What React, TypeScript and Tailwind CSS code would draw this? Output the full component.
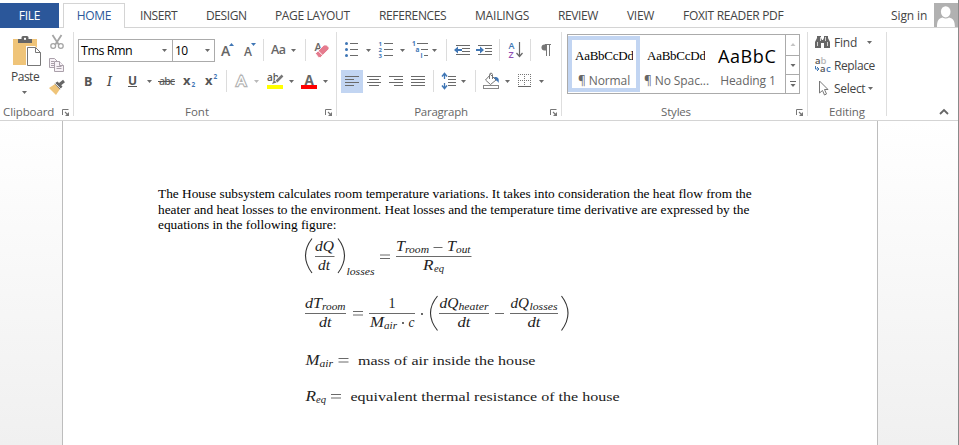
import React from "react";

const GREY = "#6a6a6a";
const BLUE = "#3f76b5";

type KidProps = { children?: React.ReactNode };

/* A strip of a toolbar row; coordinates inside are those of the window. */
function Cell({ x, w, y, h = 26, children }: KidProps & { x: number; w: number; y: number; h?: number }) {
  return (
    <svg width={w} height={h} viewBox={`${x} ${y} ${w} ${h}`} className="block shrink-0" fontFamily="'Open Sans', sans-serif">
      {children}
    </svg>
  );
}

function Arrow({ x, y, c = GREY }: { x: number; y: number; c?: string }) {
  return <path d={`M${x} ${y}h5l-2.5 3z`} fill={c} />;
}

function VSep({ x, y }: { x: number; y: number }) {
  return <rect x={x} y={y} width="1" height="22" fill="#dcdcdc" />;
}

function Lines({ rows, c = GREY }: { rows: number[][]; c?: string }) {
  return (
    <>
      {rows.map(([x, y, w], i) => (
        <rect key={i} x={x} y={y} width={w} height="1" fill={c} />
      ))}
    </>
  );
}

function Launcher() {
  return (
    <svg width="8" height="8" viewBox="0 0 8 8" className="block shrink-0">
      <path d="M.5 6V.5H6.5" fill="none" stroke="#777" />
      <path d="M3 3l3 3" stroke="#777" strokeWidth="1.1" />
      <path d="M7 3v4H3z" fill="#777" />
    </svg>
  );
}

function Divider() {
  return <div className="mt-1 h-[84px] w-px shrink-0 bg-[#dedede]" />;
}

function Tab({ label, className }: { label: string; className: string }) {
  return <div className={`h-[27px] shrink-0 pt-[7px] text-[12px] leading-[17px] text-[#444] ${className}`}>{label}</div>;
}

function TabBar() {
  return (
    <div className="flex h-7 shrink-0 border-b border-[#d4d4d4]">
      <div className="mt-[3px] h-[25px] w-[59px] shrink-0 bg-[#2b579a] pt-1 text-center text-[12px] leading-[17px] tracking-[-0.3px] text-white">FILE</div>
      <div className="mt-[3px] ml-1 h-[25px] w-[62px] shrink-0 border border-b-0 border-[#d4d4d4] bg-white pt-[3px] text-center text-[12px] leading-[17px] tracking-[-0.3px] text-[#2b579a]">HOME</div>
      <Tab label="INSERT" className="ml-[15px] w-[66px] tracking-[-0.4px]" />
      <Tab label="DESIGN" className="w-[69px] tracking-[-0.4px]" />
      <Tab label="PAGE LAYOUT" className="w-[104px] tracking-[-0.35px]" />
      <Tab label="REFERENCES" className="w-[96px] tracking-[-0.35px]" />
      <Tab label="MAILINGS" className="w-[83px] tracking-[-0.2px]" />
      <Tab label="REVIEW" className="w-[69px] tracking-[-0.4px]" />
      <Tab label="VIEW" className="w-[56px] tracking-[-0.3px]" />
      <Tab label="FOXIT READER PDF" className="w-[208px] tracking-[-0.3px]" />
      <Tab label="Sign in" className="w-[43px] tracking-[-0.1px]" />
      <svg width="24" height="24" viewBox="0 0 24 24" className="mt-[3px] block shrink-0 bg-[#b1b1b1]">
        <ellipse cx="11.7" cy="8.8" rx="4.8" ry="5.6" fill="#fff" />
        <path d="M3 24c0-6 1.5-8.5 5.5-9.4 2 1.3 4.6 1.3 6.6 0 4 .9 5.8 3.4 5.8 9.4z" fill="#fff" />
      </svg>
    </div>
  );
}

function GroupName({ children, className }: KidProps & { className: string }) {
  return <div className={`shrink-0 text-center text-[11.5px] leading-[16px] text-[#666] ${className}`}>{children}</div>;
}

function Clipboard() {
  return (
    <div className="flex w-[73px] shrink-0 flex-col">
      <div className="flex h-[76px]">
        <div className="flex w-[46px] flex-col">
          <Cell x={0} w={46} y={28} h={41}>
            <rect x="13" y="39" width="24" height="26" fill="#efc479" />
            <path d="M18 43v-4h3.5v-1.500a1.500 1.500 0 011.500-1.500h4a1.500 1.500 0 011.500 1.500v1.500H32v4z" fill="#666" />
            <rect x="24" y="37.800" width="2" height="2" fill="#fff" />
            <path d="M26 46h9l6.500 6.500V67H26z" fill="#fff" />
            <path d="M27.500 47.500h8l5 5V65.500h-13zM35.500 47.500v5h5" fill="none" stroke="#777" />
          </Cell>
          <div className="pl-[11px] text-[12px] leading-[16px] tracking-[-0.5px] text-[#444]">Paste</div>
          <Cell x={0} w={46} y={85} h={12}><Arrow x={22} y={91} /></Cell>
        </div>
        <Cell x={46} w={27} y={28} h={76}>
          <g fill="none" stroke="#a5a5a5">
            <path d="M52.500 35l6.500 10M61.500 35l-6.500 10" strokeWidth="1.800" />
            <circle cx="53.200" cy="46" r="2.400" strokeWidth="1.300" />
            <circle cx="60.800" cy="46" r="2.400" strokeWidth="1.300" />
          </g>
          <g fill="#f7f2f7" stroke="#aaa0aa">
            <path d="M49.500 58.500h5l3 3v6h-8z" />
            <path d="M51 61.500h3M51 63.500h3M51 65.500h3" />
            <path d="M54.500 61.500h5l4 4v6h-9z" />
            <path d="M59.500 61.500v4h4M56.500 66.500h5M56.500 68.500h5" />
          </g>
          <path d="M49 88l6-4 5 5-4 6z" fill="#efc479" />
          <path d="M54.500 83.500l3-2 5 5-2.500 3z" fill="#666" />
          <path d="M59 85l5-4" stroke="#666" strokeWidth="3" />
          <path d="M55 83l6.500 6.500" stroke="#fff" strokeWidth=".8" />
        </Cell>
      </div>
      <div className="flex">
        <GroupName className="ml-[3px] w-[51px] text-left tracking-[-0.1px]">Clipboard</GroupName>
        <div className="mt-[5px] ml-2"><Launcher /></div>
      </div>
    </div>
  );
}

function FontGroup() {
  return (
    <div className="flex w-[262px] shrink-0 flex-col">
      <div className="mt-[10px] flex h-[27px] pl-1">
        <div className="mt-px flex h-[23px] w-[95px] shrink-0 border border-[#ababab]">
          <div className="w-[83px] pl-[2px] text-[12.500px] leading-[22px] tracking-[-0.5px] text-black">Tms Rmn</div>
          <svg width="5" height="3" viewBox="0 0 5 3" className="mt-[9px]"><path d="M0 0h5L2.500 3z" fill={GREY} /></svg>
        </div>
        <div className="mt-px -ml-px flex h-[23px] w-[43px] shrink-0 border border-[#ababab]">
          <div className="w-[32px] pl-[2px] text-[12px] leading-[22px] tracking-[-0.7px] text-black">10</div>
          <svg width="5" height="3" viewBox="0 0 5 3" className="mt-[9px]"><path d="M0 0h5L2.500 3z" fill={GREY} /></svg>
        </div>
        <Cell x={215} w={24} y={38}>
          <text x="221" y="56" fontSize="14" fontWeight="600" fill="#666">A</text>
          <path d="M229 46l2.500-3 2.500 3z" fill={BLUE} />
        </Cell>
        <Cell x={239} w={28} y={38}>
          <text x="244" y="56" fontSize="12" fontWeight="600" fill="#666">A</text>
          <path d="M251 43h5l-2.500 3z" fill={BLUE} />
          <VSep x={263} y={39} />
        </Cell>
        <Cell x={267} w={40} y={38}>
          <text x="271" y="54" fontSize="12.500" fontWeight="600" fill="#666" textLength="15">Aa</text>
          <Arrow x={291} y={49} />
          <VSep x={305} y={39} />
        </Cell>
        <Cell x={307} w={28} y={38}>
          <text x="314.500" y="51" fontSize="11" fontWeight="600" fill="#666">A</text>
          <path d="M315.500 53.500l8.500-8.500h2.500l2.500 2.500v1.500l-8.500 8.500h-2z" fill="#e57b8e" stroke="#fff" strokeWidth=".8" />
          <path d="M317.800 50.500l5.200 5.200" stroke="#fff" />
        </Cell>
      </div>
      <div className="mt-1 flex h-[35px]">
        <Cell x={74} w={26} y={69}><text x="84" y="85.500" fontSize="12.500" fontWeight="700" fill="#555">B</text></Cell>
        <Cell x={100} w={22} y={69}><text x="107" y="85.500" fontSize="13" fontStyle="italic" fontFamily="'DejaVu Serif', serif" fill="#444">I</text></Cell>
        <Cell x={122} w={34} y={69}>
          <text x="128" y="84.500" fontSize="12" fontWeight="700" fill="#555">U</text>
          <rect x="128" y="86" width="9" height="1" fill="#555" />
          <Arrow x={147} y={80} />
        </Cell>
        <Cell x={156} w={23} y={69}>
          <text x="159" y="85" fontSize="10.500" fontWeight="600" fill="#666" textLength="16">abc</text>
          <rect x="158" y="81" width="17" height="1" fill="#555" />
        </Cell>
        <Cell x={179} w={22} y={69}>
          <text x="183" y="85" fontSize="13" fontWeight="700" fill="#555">x</text>
          <text x="191.500" y="87" fontSize="6.500" fontWeight="700" fill={BLUE}>2</text>
        </Cell>
        <Cell x={201} w={28} y={69}>
          <text x="205" y="85" fontSize="13" fontWeight="700" fill="#555">x</text>
          <text x="213.500" y="79" fontSize="6.500" fontWeight="700" fill={BLUE}>2</text>
          <VSep x={226} y={70} />
        </Cell>
        <Cell x={229} w={34} y={69}>
          <text x="236.500" y="86" fontSize="15" fill="#fff" stroke="#b4b4b4" strokeWidth="2.500" paintOrder="stroke">A</text>
          <Arrow x={254} y={80} c="#b9b9b9" />
        </Cell>
        <Cell x={263} w={35} y={69}>
          <text x="267" y="80.500" fontSize="10" fontWeight="600" fill="#555">ab</text>
          <path d="M282.500 75l-8 8" stroke="#fff" strokeWidth="4" />
          <path d="M282.500 75.500l-6 6" stroke="#777" strokeWidth="2.500" />
          <path d="M272 84l2-4 2.500 2.500z" fill="#777" />
          <rect x="267" y="85" width="16" height="4" fill="#ff0" />
          <Arrow x={289} y={80} />
        </Cell>
        <Cell x={298} w={36} y={69}>
          <text x="304.500" y="84.500" fontSize="13.500" fontWeight="700" fill="#666">A</text>
          <rect x="301" y="85" width="16" height="4" fill="#f00" />
          <Arrow x={323} y={80} />
        </Cell>
      </div>
      <div className="flex">
        <GroupName className="ml-[108px] w-[30px]">Font</GroupName>
        <div className="mt-[5px] ml-[113px]"><Launcher /></div>
      </div>
    </div>
  );
}

function ParagraphGroup() {
  return (
    <div className="flex w-[224px] shrink-0 flex-col">
      <div className="mt-[10px] flex h-[27px]">
        <Cell x={337} w={38} y={38}>
          <g fill={BLUE}><circle cx="346.500" cy="43.500" r="1.500" /><circle cx="346.500" cy="49.500" r="1.500" /><circle cx="346.500" cy="55.500" r="1.500" /></g>
          <Lines rows={[[350, 43, 8], [350, 49, 8], [350, 55, 8]]} />
          <Arrow x={366} y={49} />
        </Cell>
        <Cell x={375} w={34} y={38}>
          <g fontSize="6" fontWeight="700" fill={BLUE}>
            <text x="378.500" y="45.800">1</text><text x="378.500" y="52">2</text><text x="378.500" y="58.200">3</text>
          </g>
          <Lines rows={[[384, 43, 9], [384, 49, 9], [384, 55, 9]]} />
          <Arrow x={400} y={49} />
        </Cell>
        <Cell x={409} w={41} y={38}>
          <g fontSize="6.500" fontWeight="700" fill={BLUE}>
            <text x="412" y="46">1</text><text x="415.500" y="52">a</text><text x="420.500" y="58">i</text>
          </g>
          <Lines rows={[[417, 43, 11], [421, 49, 7], [424, 55, 4]]} />
          <Arrow x={432} y={49} />
          <VSep x={446} y={39} />
        </Cell>
        <Cell x={450} w={23} y={38}>
          <Lines rows={[[456, 45, 14], [462, 48, 8], [462, 51, 8], [456, 54, 14]]} />
          <path d="M454 50l4-3.500v2.500h4v2h-4v2.500z" fill={BLUE} />
        </Cell>
        <Cell x={473} w={29} y={38}>
          <Lines rows={[[478, 45, 14], [485, 48, 7], [485, 51, 7], [478, 54, 14]]} />
          <path d="M484 50l-4-3.500v2.500h-4v2h4v2.500z" fill={BLUE} />
          <VSep x={499} y={39} />
        </Cell>
        <Cell x={502} w={31} y={38}>
          <text x="508.500" y="49" fontSize="9" fontWeight="600" fill={BLUE}>A</text>
          <text x="508.500" y="58" fontSize="9" fontWeight="600" fill="#9150b3">Z</text>
          <path d="M519.500 42v14M516.500 53l3 3.500 3-3.500" fill="none" stroke="#666" strokeWidth="1.200" />
          <VSep x={530} y={39} />
        </Cell>
        <Cell x={533} w={28} y={38}>
          <path d="M546 44.500h-1.500a3 3 0 000 6h1.500z" fill="#777" />
          <path d="M545 44.500h6M546.500 44v12M549.500 44v12" fill="none" stroke="#777" />
        </Cell>
      </div>
      <div className="mt-1 flex h-[35px]">
        <Cell x={337} w={26} y={69}>
          <rect x="341" y="70" width="22" height="23" fill="#c2d5f2" />
          <Lines rows={[[345, 76, 14], [345, 79, 9], [345, 82, 14], [345, 85, 9]]} />
        </Cell>
        <Cell x={363} w={22} y={69}><Lines rows={[[367, 76, 14], [369, 79, 10], [367, 82, 14], [369, 85, 10]]} /></Cell>
        <Cell x={385} w={22} y={69}><Lines rows={[[389, 76, 14], [394, 79, 9], [389, 82, 14], [394, 85, 9]]} /></Cell>
        <Cell x={407} w={31} y={69}>
          <Lines rows={[[411, 76, 14], [411, 79, 14], [411, 82, 14], [411, 85, 14]]} />
          <VSep x={433} y={70} />
        </Cell>
        <Cell x={438} w={40} y={69}>
          <path d="M444.500 74v14" stroke={BLUE} strokeWidth="1.300" strokeDasharray="5 4" />
          <path d="M442 76.500l2.500-3 2.500 3M442 85.500l2.500 3 2.500-3" fill="none" stroke={BLUE} strokeWidth="1.500" />
          <Lines rows={[[448, 76, 8], [448, 79, 8], [448, 82, 8], [448, 85, 8]]} />
          <Arrow x={461} y={80} />
          <VSep x={475} y={70} />
        </Cell>
        <Cell x={478} w={36} y={69}>
          <path d="M485.500 80l5-5.500 5.500 5.500-5.500 4.500z" fill="#fff" stroke="#777" />
          <path d="M489.500 79v-4.500c0-1.800 3-1.800 3 0V79" fill="none" stroke="#777" />
          <path d="M494 77c4-.5 5.500 1.500 4.500 6-1-1.800-1.800-2.500-2.500-2.500z" fill={BLUE} />
          <rect x="483.500" y="85.500" width="15" height="3" fill="#fff" stroke="#888" />
          <Arrow x={505} y={80} />
        </Cell>
        <Cell x={514} w={47} y={69}>
          <g fill="none" stroke="#777" strokeDasharray="1 1">
            <path d="M518 74.500h13M518 80.500h13M518.500 74v13M524.500 74v13M530.500 74v13" />
          </g>
          <rect x="518" y="86" width="13" height="1" fill="#666" />
          <Arrow x={539} y={80} />
        </Cell>
      </div>
      <div className="flex">
        <GroupName className="ml-[74px] w-[60px] tracking-[-0.25px]">Paragraph</GroupName>
        <div className="mt-[5px] ml-[79px]"><Launcher /></div>
      </div>
    </div>
  );
}

function StyleCard({ sample, name, className, serif }: { sample: string; name: string; className: string; serif?: boolean }) {
  return (
    <div className={`h-[56px] w-[72px] shrink-0 border-4 ${className}`}>
      <div className={serif
        ? "ml-[3px] h-7 w-[58px] overflow-hidden font-['Liberation_Serif',serif] text-[13px] leading-[31px] tracking-[-0.25px] whitespace-nowrap text-black"
        : "h-7 overflow-hidden pl-[2px] text-[18px] leading-[33px] tracking-[0.6px] whitespace-nowrap text-black"}>{sample}</div>
      <div className="text-center text-[12px] leading-[25px] tracking-[-0.1px] whitespace-nowrap text-[#666]">{name}</div>
    </div>
  );
}

function StylesGroup() {
  return (
    <div className="flex w-[245px] shrink-0 flex-col">
      <div className="mt-[6px] ml-[5px] flex h-[60px] w-[233px] border border-[#ababab]">
        <div className="flex w-[217px] shrink-0 pt-px">
          <StyleCard serif sample="AaBbCcDd" name="¶ Normal" className="border-[#c2d5f2]" />
          <StyleCard serif sample="AaBbCcDd" name="¶ No Spac..." className="border-transparent" />
          <StyleCard sample="AaBbC" name="Heading 1" className="border-transparent" />
        </div>
        <div className="flex w-[15px] shrink-0 flex-col border-l border-[#ababab]">
          <svg width="14" height="58" viewBox="0 0 14 58" className="block">
            <path d="M4.500 11h5L7 8z" fill="#c4c4c4" />
            <path d="M0 20.500h14M0 39.500h14" stroke="#ababab" />
            <path d="M4.500 29h5L7 32z" fill={GREY} />
            <path d="M4 46.500h6" stroke={GREY} />
            <path d="M4.500 49h5L7 52z" fill={GREY} />
          </svg>
        </div>
      </div>
      <div className="mt-[10px] flex">
        <GroupName className="ml-[94px] w-[40px] tracking-[-0.2px]">Styles</GroupName>
        <div className="mt-[5px] ml-[100px]"><Launcher /></div>
      </div>
    </div>
  );
}

function EditRow({ label, className, children }: KidProps & { label: string; className: string }) {
  return (
    <div className="flex h-[23px]">
      {children}
      <div className={`text-[12px] leading-[23px] whitespace-nowrap text-[#444] ${className}`}>{label}</div>
      <svg width="5" height="3" viewBox="0 0 5 3" className={label === "Replace" ? "hidden" : "mt-[10px] block"}>
        <path d="M0 0h5L2.500 3z" fill={GREY} />
      </svg>
    </div>
  );
}

function EditingGroup() {
  return (
    <div className="flex w-[78px] shrink-0 flex-col">
      <div className="mt-[3px] flex h-[73px] flex-col">
        <EditRow label="Find" className="w-[33px] tracking-[-0.2px]">
          <Cell x={808} w={26} y={31} h={23}>
            <path d="M815 48v-6l2-4v-2h4v2l1 2h1l1-2v-2h4v2l2 4v6h-6v-5h-3v5z" fill="#666" />
            <path d="M817.500 42v4M820.500 37v4M825.500 37v4M827.500 42v4" stroke="#fff" strokeWidth=".7" />
          </Cell>
        </EditRow>
        <EditRow label="Replace" className="w-[44px] tracking-[-0.4px]">
          <Cell x={808} w={26} y={54} h={23}>
            <g fontSize="9.500" fontWeight="600">
              <text x="815" y="64" fill="#555">a</text><text x="820.500" y="64" fill="#b7b7b7">b</text>
              <text x="820" y="71.500" fill="#555">a</text><text x="826" y="71.500" fill={BLUE}>c</text>
            </g>
            <path d="M815.500 66v3h3M817 67l2 2-2 2" fill="none" stroke={BLUE} />
          </Cell>
        </EditRow>
        <EditRow label="Select" className="w-[34px] tracking-[-0.3px]">
          <Cell x={808} w={26} y={77} h={23}>
            <path d="M819.500 81v12l3-2.500 2 4.500 2-1-2-4.500h3.500z" fill="#fff" stroke="#777" />
          </Cell>
        </EditRow>
      </div>
      <GroupName className="w-full tracking-[-0.1px]">Editing</GroupName>
    </div>
  );
}

function Ribbon() {
  return (
    <div className="flex h-[93px] shrink-0 border-b border-[#d4d4d4]">
      <Clipboard />
      <Divider />
      <FontGroup />
      <Divider />
      <ParagraphGroup />
      <Divider />
      <StylesGroup />
      <Divider />
      <EditingGroup />
      <Divider />
      <svg width="12" height="8" viewBox="0 0 12 8" className="mt-[80px] ml-[51px]">
        <path d="M2 6l4-4 4 4" fill="none" stroke="#666" strokeWidth="1.800" />
      </svg>
    </div>
  );
}

type RunProps = { x: number; y: number; w: number; s?: number; t: string; up?: boolean };

function Run({ x, y, w, s = 14.5, t, up }: RunProps) {
  return (
    <text x={x} y={y} fontSize={s} textLength={w} lengthAdjust="spacingAndGlyphs" fontStyle={up ? "normal" : "italic"}>{t}</text>
  );
}

function Equal({ x, y }: { x: number; y: number }) {
  return <path d={`M${x} ${y}h10M${x} ${y + 3.5}h10`} stroke="#444" strokeWidth=".8" />;
}

function Equations() {
  return (
    <svg width="330" height="180" viewBox="300 234 330 180" className="ml-[237px] block" fill="#222" fontFamily="'Liberation Serif', serif">
      <g fill="none" stroke="#333" strokeWidth="1.100">
        <path d="M312 238.500q-13 17 0 34.500M338 238.500q13 17 0 34.500M437.500 296q-14 17 0 34.500M561.500 296q13 17 0 34.500" />
      </g>
      <path d="M315 256.500h19.500M396 256.500h75.500M305 313.500h41M369 313.500h46M439 313.500h50M510 313.500h48M433.500 247.500h9M495 313.500h9" stroke="#444" strokeWidth=".8" />
      <Run x={315} y={251} w={19} t="dQ" />
      <Run x={318} y={270} w={12} t="dt" />
      <Run x={346.500} y={275} w={28} s={10.500} t="losses" />
      <Equal x={380} y={255} />
      <Run x={396} y={251} w={9} t="T" />
      <Run x={405} y={252.500} w={24} s={10.500} t="room" />
      <Run x={447} y={251} w={9} t="T" />
      <Run x={456} y={252.500} w={14.500} s={10.500} t="out" />
      <Run x={423} y={270} w={10.500} t="R" />
      <Run x={434} y={272} w={10} s={10.500} t="eq" />

      <Run x={305} y={307.500} w={17} t="dT" />
      <Run x={322} y={309.500} w={23.500} s={10.500} t="room" />
      <Run x={319} y={327} w={12.500} t="dt" />
      <Equal x={353} y={311.500} />
      <Run x={388.500} y={307.500} w={7} t="1" up />
      <Run x={370} y={327} w={14} t="M" />
      <Run x={384} y={328.500} w={13} s={10.500} t="air" />
      <circle cx="403" cy="323" r=".9" />
      <Run x={408.500} y={327} w={6} t="c" />
      <circle cx="422" cy="314" r=".9" />
      <Run x={439.500} y={307.500} w={19} t="dQ" />
      <Run x={458.500} y={309.500} w={30} s={10.500} t="heater" />
      <Run x={457.500} y={327} w={13} t="dt" />
      <Run x={510.500} y={307.500} w={18.500} t="dQ" />
      <Run x={529.500} y={309.500} w={28} s={10.500} t="losses" />
      <Run x={527.500} y={327} w={13} t="dt" />

      <Run x={305.500} y={364.500} w={14} t="M" />
      <Run x={319.500} y={366.500} w={13.500} s={10.500} t="air" />
      <Equal x={338.500} y={358.500} />
      <Run x={358} y={364.500} w={177.500} s={13.500} t="mass of air inside the house" up />
      <Run x={305.500} y={400.500} w={10.500} t="R" />
      <Run x={316} y={402.500} w={10} s={10.500} t="eq" />
      <Equal x={331} y={394.500} />
      <Run x={350.500} y={400.500} w={269} s={13.500} t="equivalent thermal resistance of the house" up />
    </svg>
  );
}

export default function App() {
  return (
    <div className="flex h-[445px] w-[959px] flex-col overflow-hidden border-r border-[#8a8a8a] bg-white font-['Open_Sans',sans-serif]">
      <TabBar />
      <Ribbon />
      <div className="flex h-[324px] bg-linear-to-b from-white to-[#f0f0f0]">
        <div className="ml-[62px] w-[816px] border-x border-[#bdbdbd] bg-white pt-[65px]">
          <div className="pl-[95px] font-['Liberation_Serif',serif] text-[13.330px] leading-[15.500px] whitespace-nowrap text-black">
            <p>The House subsystem calculates room temperature variations. It takes into consideration the heat flow from the</p>
            <p>heater and heat losses to the environment. Heat losses and the temperature time derivative are expressed by the</p>
            <p>equations in the following figure:</p>
          </div>
          <div className="mt-[1.500px]">
            <Equations />
          </div>
        </div>
      </div>
    </div>
  );
}
